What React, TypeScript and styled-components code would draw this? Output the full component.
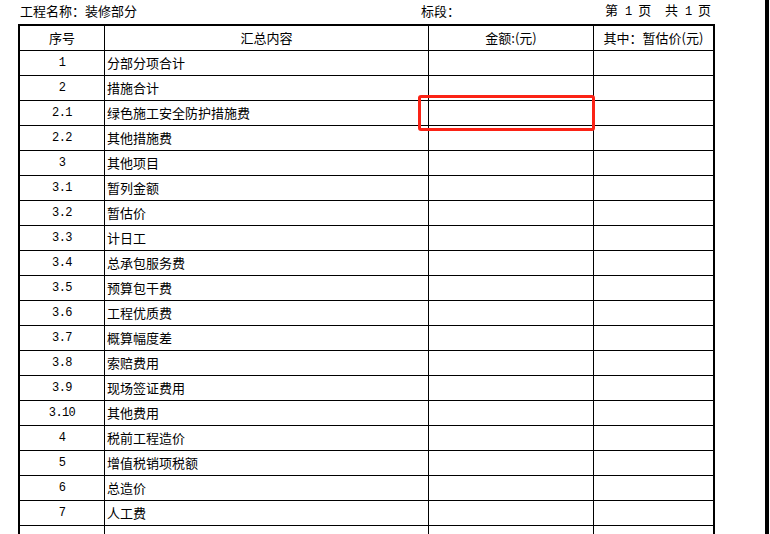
import React from "react";
import styled, { createGlobalStyle } from "styled-components";

const Global = createGlobalStyle`
  html, body {
    margin: 0;
    padding: 0;
    background: #ffffff;
    overflow: hidden;
  }
  body {
    font-family: "Noto Sans CJK SC", "Noto Sans", sans-serif;
    color: #000;
  }
`;

const Screen = styled.div`
  display: flex;
  align-items: flex-start;
  width: 770px;
  height: 534px;
  overflow: hidden;
`;

const Sheet = styled.div`
  width: 765px;
  flex-shrink: 0;
  padding-left: 18px;
  box-sizing: border-box;
  display: flex;
  flex-direction: column;
`;

const EdgeBar = styled.div`
  width: 4px;
  height: 534px;
  flex-shrink: 0;
  background: #000;
`;

const TitleBar = styled.div`
  flex-shrink: 0;
  width: 697px;
  height: 24px;
  display: flex;
  align-items: center;
  font-size: 13px;
  line-height: 16px;
  padding-bottom: 3px;
  box-sizing: border-box;
`;

const ProjectName = styled.div`
  width: 401px;
  padding-left: 2px;
`;

const Section = styled.div`
  flex: 1;
`;

const PageInfo = styled.div`
  white-space: pre;
  word-spacing: 4px;
  padding-right: 4px;
`;

const Num = styled.span`
  font-family: "Liberation Mono", "DejaVu Sans Mono", monospace;
  font-size: 12px;
  letter-spacing: -1px;
`;

const Grid = styled.div`
  flex-shrink: 0;
  display: grid;
  grid-template-columns: 84px 323px 164px 119px;
  grid-auto-rows: 24px;
  gap: 1px;
  background: #000;
  border: 2px solid #000;
  width: 693px;
`;

const Cell = styled.div<{ $align?: "left" | "center" }>`
  position: relative;
  background: #fff;
  font-size: 13px;
  line-height: 24px;
  white-space: nowrap;
  text-align: ${(p) => (p.$align === "left" ? "left" : "center")};
  padding-left: ${(p) => (p.$align === "left" ? "2px" : "0")};
`;

const NoCell = styled(Cell)`
  font-family: "Liberation Mono", "DejaVu Sans Mono", monospace;
  font-size: 12px;
  letter-spacing: -0.6px;
`;

const Highlight = styled.div`
  position: absolute;
  left: -11px;
  top: -6px;
  width: 177px;
  height: 36px;
  box-sizing: border-box;
  border: 3px solid #fb2316;
  border-radius: 3px;
  z-index: 2;
  pointer-events: none;
`;

const rows: [string, string][] = [
  ["1", "分部分项合计"],
  ["2", "措施合计"],
  ["2.1", "绿色施工安全防护措施费"],
  ["2.2", "其他措施费"],
  ["3", "其他项目"],
  ["3.1", "暂列金额"],
  ["3.2", "暂估价"],
  ["3.3", "计日工"],
  ["3.4", "总承包服务费"],
  ["3.5", "预算包干费"],
  ["3.6", "工程优质费"],
  ["3.7", "概算幅度差"],
  ["3.8", "索赔费用"],
  ["3.9", "现场签证费用"],
  ["3.10", "其他费用"],
  ["4", "税前工程造价"],
  ["5", "增值税销项税额"],
  ["6", "总造价"],
  ["7", "人工费"],
  ["", ""],
];

export default function App() {
  return (
    <>
      <Global />
      <Screen>
        <Sheet>
          <TitleBar>
            <ProjectName>工程名称：装修部分</ProjectName>
            <Section>标段：</Section>
            <PageInfo>
              第 <Num>1</Num> 页  共 <Num>1</Num> 页
            </PageInfo>
          </TitleBar>
          <Grid>
            <Cell>序号</Cell>
            <Cell>汇总内容</Cell>
            <Cell>金额:(元)</Cell>
            <Cell>其中：暂估价(元)</Cell>
            {rows.map(([no, name], i) => (
              <React.Fragment key={i}>
                <NoCell>{no}</NoCell>
                <Cell $align="left">{name}</Cell>
                <Cell>{no === "2.1" && <Highlight />}</Cell>
                <Cell />
              </React.Fragment>
            ))}
          </Grid>
        </Sheet>
        <EdgeBar />
      </Screen>
    </>
  );
}
